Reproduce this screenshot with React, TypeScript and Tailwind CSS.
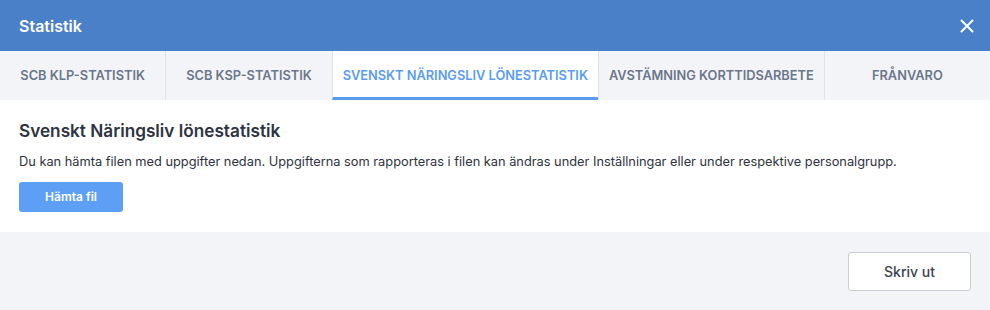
import React from "react";

const tabs = [
  "SCB KLP-STATISTIK",
  "SCB KSP-STATISTIK",
  "SVENSKT NÄRINGSLIV LÖNESTATISTIK",
  "AVSTÄMNING KORTTIDSARBETE",
  "FRÅNVARO",
];

export default function App() {
  return (
    <div className="w-[990px] h-[310px] flex flex-col bg-[#f3f4f8] font-['Inter','Liberation_Sans',sans-serif] overflow-hidden">
      <div className="h-[51px] shrink-0 bg-[#4a80c8] flex items-center justify-between pl-[19px] pr-[16px]">
        <span className="text-white text-[16px] font-semibold">Statistik</span>
        <svg width="14" height="14" viewBox="0 0 14 14" className="text-white">
          <path d="M1.5 1.5 L12.5 12.5 M12.5 1.5 L1.5 12.5" stroke="currentColor" strokeWidth="2" strokeLinecap="round" />
        </svg>
      </div>
      <div className="h-[49px] shrink-0 flex bg-[#f3f4f8]">
        {tabs.map((t, i) => {
          const active = i === 2;
          return (
            <div
              key={t}
              className={
                active
                  ? "flex-1 basis-0 px-[10px] whitespace-nowrap flex items-center justify-center bg-white text-[#5a9cf0] text-[12.8px] font-semibold border-b-[3px] border-[#5a9cf0] pt-[3px] border-l border-l-[#dfe2e8]"
                  : i === 0
                  ? "flex-1 basis-0 px-[10px] whitespace-nowrap flex items-center justify-center text-[#6b778a] text-[12.8px] font-semibold"
                  : "flex-1 basis-0 px-[10px] whitespace-nowrap flex items-center justify-center text-[#6b778a] text-[12.8px] font-semibold border-l border-[#dfe2e8]"
              }
            >
              {t}
            </div>
          );
        })}
      </div>
      <div className="h-[132px] shrink-0 bg-white px-[19px] pt-[19px]">
        <h2 className="text-[17.2px] font-semibold text-[#2d3340] leading-[24px]">Svenskt Näringsliv lönestatistik</h2>
        <p className="mt-[10px] text-[12.8px] text-[#2d3340] leading-[18px]">
          Du kan hämta filen med uppgifter nedan. Uppgifterna som rapporteras i filen kan ändras under Inställningar eller under respektive personalgrupp.
        </p>
        <button className="mt-[11px] w-[104px] h-[30px] rounded-[3px] bg-[#5d9ff5] text-white text-[12px] font-semibold">
          Hämta fil
        </button>
      </div>
      <div className="flex-1 flex justify-end items-start pt-[20px] pr-[19px]">
        <button className="w-[123px] h-[39px] rounded-[3px] bg-white border border-[#c9cdd5] text-[#3a4250] text-[14px] font-medium">
          Skriv ut
        </button>
      </div>
    </div>
  );
}
